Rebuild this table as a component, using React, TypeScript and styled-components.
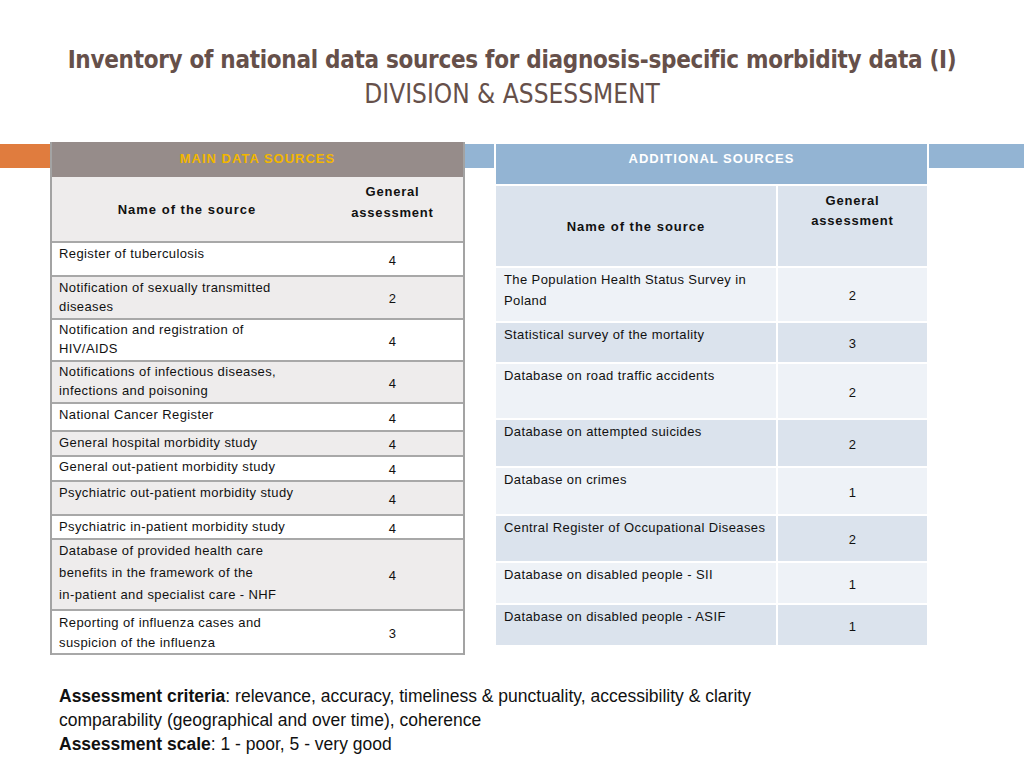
import React from "react";
import styled, { createGlobalStyle } from "styled-components";

const Global = createGlobalStyle`
  html, body { margin: 0; padding: 0; background: #ffffff; }
  body { width: 1024px; height: 768px; overflow: hidden; font-family: "Liberation Sans", Arial, sans-serif; color: #111; }
`;

const Slide = styled.div`
  width: 1024px;
  height: 768px;
  display: flex;
  flex-direction: column;
`;

const TitleBlock = styled.header`
  padding-top: 43px;
  text-align: center;
  color: #66504a;
  font-family: "Liberation Sans Narrow", "DejaVu Sans Condensed", sans-serif;
`;

const TitleMain = styled.h1`
  margin: 0;
  font-size: 24px;
  line-height: 34px;
  font-weight: 700;
  letter-spacing: -0.3px;
`;

const TitleSub = styled.div`
  font-size: 26px;
  line-height: 34px;
  font-weight: 400;
`;

const TablesSection = styled.section`
  margin-top: 31px;
  display: flex;
  align-items: flex-start;
  padding-left: 50px;
  gap: 31px;
  background-image: linear-gradient(
    to right,
    #e07c3e 0px,
    #e07c3e 50px,
    transparent 50px,
    transparent 465px,
    #93b4d3 465px,
    #93b4d3 100%
  );
  background-repeat: no-repeat;
  background-size: 100% 24px;
  background-position: 0 2px;
`;

/* ---------- Left table ---------- */
const MainTable = styled.div`
  width: 415px;
  box-sizing: border-box;
  border-left: 2px solid #a3a3a3;
  border-right: 2px solid #a3a3a3;
  background: #fff;
  letter-spacing: 0.4px;
`;

const MainCaption = styled.div`
  height: 35px;
  background: #968c8a;
  color: #f2b600;
  font-weight: 700;
  font-size: 13px;
  letter-spacing: 1px;
  display: flex;
  align-items: center;
  justify-content: center;
  padding-bottom: 3px;
  box-sizing: border-box;
`;

const MainRow = styled.div<{ $h: number; $shade: boolean }>`
  display: grid;
  grid-template-columns: 270px 1fr;
  height: ${(p) => p.$h}px;
  box-sizing: border-box;
  border-bottom: 2px solid #a8a8a8;
  background: ${(p) => (p.$shade ? "#eeecec" : "#ffffff")};
  font-size: 13px;
`;

const MainName = styled.div<{ $lh: number; $pt: number }>`
  padding: ${(p) => p.$pt}px 4px 0 7px;
  line-height: ${(p) => p.$lh}px;
  white-space: nowrap;
`;

const MainScore = styled.div`
  display: flex;
  align-items: center;
  justify-content: center;
  padding-top: 2px;
`;

const HeadName = styled.div`
  display: flex;
  align-items: center;
  justify-content: center;
  font-weight: 700;
  font-size: 13px;
  letter-spacing: 1px;
`;

const HeadScore = styled.div<{ $pt: number }>`
  text-align: center;
  font-weight: 700;
  font-size: 13px;
  line-height: 21px;
  letter-spacing: 0.8px;
  padding-top: ${(p) => p.$pt}px;
`;

/* ---------- Right table ---------- */
const AddTable = styled.div`
  width: 431px;
  margin-top: 2px;
  display: flex;
  flex-direction: column;
  gap: 2px;
  background: #fff;
  outline: 2px solid #fff;
  letter-spacing: 0.4px;
`;

const AddCaption = styled.div`
  height: 40px;
  background: #93b4d3;
  color: #ffffff;
  font-weight: 700;
  font-size: 13px;
  letter-spacing: 1px;
  text-align: center;
  line-height: 20px;
  padding-top: 5px;
  box-sizing: border-box;
`;

const AddRow = styled.div<{ $h: number }>`
  display: grid;
  grid-template-columns: 280px 149px;
  column-gap: 2px;
  height: ${(p) => p.$h}px;
  font-size: 13px;
`;

const AddCell = styled.div<{ $shade: boolean }>`
  background: ${(p) => (p.$shade ? "#dbe3ed" : "#eef2f7")};
`;

const AddName = styled(AddCell)`
  padding: 1px 4px 0 8px;
  line-height: 21px;
  white-space: nowrap;
`;

const AddScore = styled(AddCell)`
  display: flex;
  align-items: center;
  justify-content: center;
  padding-top: 2px;
  box-sizing: border-box;
`;

const AddHeadName = styled(AddCell)`
  display: flex;
  align-items: center;
  justify-content: center;
  font-weight: 700;
  letter-spacing: 1px;
`;

const AddHeadScore = styled(AddCell)`
  text-align: center;
  font-weight: 700;
  line-height: 20px;
  letter-spacing: 0.8px;
  padding-top: 5px;
  box-sizing: border-box;
`;

/* ---------- Footer ---------- */
const Notes = styled.div`
  margin-top: 29px;
  padding-left: 59px;
  font-size: 17.5px;
  line-height: 24px;
  color: #111;
`;

const NoteLine = styled.div``;

const mainRows = [
  { name: ["Register of tuberculosis"], score: 4, h: 34, lh: 19, pt: 1 },
  { name: ["Notification of sexually transmitted", "diseases"], score: 2, h: 43, lh: 19, pt: 1 },
  { name: ["Notification and registration of", "HIV/AIDS"], score: 4, h: 42, lh: 19, pt: 0 },
  { name: ["Notifications of infectious diseases,", "infections and poisoning"], score: 4, h: 42, lh: 19, pt: 0 },
  { name: ["National Cancer Register"], score: 4, h: 28, lh: 19, pt: 1 },
  { name: ["General hospital morbidity study"], score: 4, h: 25, lh: 19, pt: 1 },
  { name: ["General out-patient morbidity study"], score: 4, h: 25, lh: 19, pt: 0 },
  { name: ["Psychiatric out-patient morbidity study"], score: 4, h: 34, lh: 19, pt: 1 },
  { name: ["Psychiatric in-patient morbidity study"], score: 4, h: 24, lh: 19, pt: 1 },
  {
    name: [
      "Database of provided health care",
      "benefits in the framework of the",
      "in-patient and specialist care - NHF",
    ],
    score: 4,
    h: 71,
    lh: 22,
    pt: 0,
  },
  { name: ["Reporting of influenza cases and", "suspicion of the influenza"], score: 3, h: 44, lh: 20, pt: 2 },
];

const addRows = [
  { name: ["The Population Health Status Survey in", "Poland"], score: 2, h: 53 },
  { name: ["Statistical survey of the mortality"], score: 3, h: 39 },
  { name: ["Database on road traffic accidents"], score: 2, h: 54 },
  { name: ["Database on attempted suicides"], score: 2, h: 46 },
  { name: ["Database on crimes"], score: 1, h: 46 },
  { name: ["Central Register of Occupational Diseases"], score: 2, h: 45 },
  { name: ["Database on disabled people - SII"], score: 1, h: 40 },
  { name: ["Database on disabled people - ASIF"], score: 1, h: 40 },
];

const Lines = ({ lines }: { lines: string[] }) => (
  <>
    {lines.map((l, i) => (
      <div key={i}>{l}</div>
    ))}
  </>
);

export default function App() {
  return (
    <>
      <Global />
      <Slide>
        <TitleBlock>
          <TitleMain>Inventory of national data sources for diagnosis-specific morbidity data (I)</TitleMain>
          <TitleSub>DIVISION &amp; ASSESSMENT</TitleSub>
        </TitleBlock>

        <TablesSection>
          <MainTable>
            <MainCaption>MAIN DATA SOURCES</MainCaption>
            <MainRow $h={66} $shade={true}>
              <HeadName>Name of the source</HeadName>
              <HeadScore $pt={4}>
                General
                <br />
                assessment
              </HeadScore>
            </MainRow>
            {mainRows.map((r, i) => (
              <MainRow key={i} $h={r.h} $shade={i % 2 === 1}>
                <MainName $lh={r.lh} $pt={r.pt}>
                  <Lines lines={r.name} />
                </MainName>
                <MainScore>{r.score}</MainScore>
              </MainRow>
            ))}
          </MainTable>

          <AddTable>
            <AddCaption>ADDITIONAL SOURCES</AddCaption>
            <AddRow $h={80}>
              <AddHeadName $shade={true}>Name of the source</AddHeadName>
              <AddHeadScore $shade={true}>
                General
                <br />
                assessment
              </AddHeadScore>
            </AddRow>
            {addRows.map((r, i) => (
              <AddRow key={i} $h={r.h}>
                <AddName $shade={i % 2 === 1}>
                  <Lines lines={r.name} />
                </AddName>
                <AddScore $shade={i % 2 === 1}>{r.score}</AddScore>
              </AddRow>
            ))}
          </AddTable>
        </TablesSection>

        <Notes>
          <NoteLine>
            <b>Assessment criteria</b>: relevance, accuracy, timeliness &amp; punctuality, accessibility &amp; clarity
          </NoteLine>
          <NoteLine>comparability (geographical and over time), coherence</NoteLine>
          <NoteLine>
            <b>Assessment scale</b>: 1 - poor, 5 - very good
          </NoteLine>
        </Notes>
      </Slide>
    </>
  );
}
